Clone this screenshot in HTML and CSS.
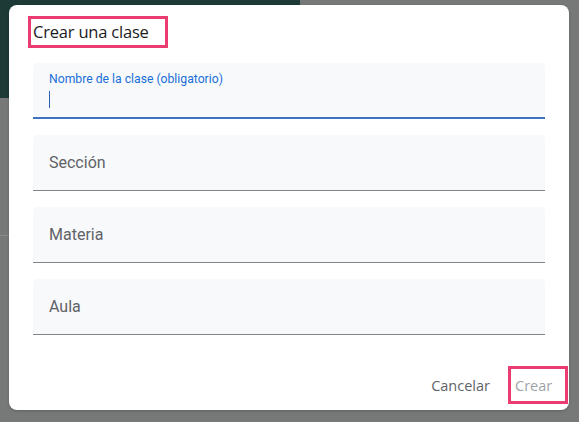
FILE: index.html
```html
<!DOCTYPE html>
<html lang="es">
<head>
<meta charset="utf-8">
<title>Crear una clase</title>
<link rel="stylesheet" href="styles.css">
</head>
<body>
<div class="backdrop-banner"></div>
<div class="backdrop-line"></div>
<div class="dialog">
  <div class="header"><h1 class="title">Crear una clase</h1></div>
  <div class="fields">
    <div class="field field-active">
      <span class="field-label">Nombre de la clase (obligatorio)</span>
      <span class="cursor"></span>
    </div>
    <div class="field"><span class="placeholder">Sección</span></div>
    <div class="field"><span class="placeholder">Materia</span></div>
    <div class="field"><span class="placeholder">Aula</span></div>
  </div>
  <div class="actions">
    <button class="btn btn-cancel">Cancelar</button>
    <button class="btn btn-create">Crear</button>
  </div>
</div>
</body>
</html>
```
FILE: styles.css
```css
* { box-sizing: border-box; }
html, body { margin: 0; height: 100%; }
body {
  background: #777878;
  font-family: Roboto, "Noto Sans", sans-serif;
  padding: 5px 10px 12px 9px;
  position: relative;
  overflow: hidden;
}
.backdrop-banner {
  position: absolute;
  left: 0; top: 0;
  width: 300px; height: 98px;
  background: #1d3a37;
  border-bottom-right-radius: 8px;
}
.backdrop-line {
  position: absolute;
  left: 0; top: 235px;
  width: 12px; height: 1px;
  background: #8a8a8a;
}
.dialog {
  position: relative;
  width: 560px;
  height: 405px;
  background: #fff;
  border-radius: 8px;
  padding: 11px 24px 0 24px;
  display: flex;
  flex-direction: column;
  box-shadow: 0 1px 3px rgba(0,0,0,0.2);
}
.header { display: flex; }
.title {
  margin: 0 0 0 -5px;
  font-family: "Open Sans", Roboto, sans-serif;
  font-weight: 500;
  font-size: 16.5px;
  color: #1b1c1e;
  border: 3px solid #ea3c71;
  height: 32px;
  line-height: 26px;
  padding: 0 16px 0 2px;
  letter-spacing: -0.2px;
}
.fields {
  margin-top: 15px;
  display: flex;
  flex-direction: column;
  gap: 16px;
}
.field {
  height: 56px;
  background: #f8f9fa;
  border-bottom: 1px solid #80868b;
  border-radius: 4px 4px 0 0;
  padding: 0 16px;
  display: flex;
  align-items: center;
  position: relative;
}
.field-active {
  border-bottom: 2px solid #3d73c1;
  flex-direction: column;
  align-items: flex-start;
  justify-content: flex-start;
  padding-top: 9px;
}
.field-label {
  font-size: 12.2px;
  color: #1a6fd8;
  line-height: 14px;
}
.cursor {
  display: block;
  width: 1px;
  height: 17px;
  background: #2b5fad;
  margin-top: 5px;
}
.placeholder {
  font-size: 16px;
  color: #5f6368;
}
.actions {
  margin-top: auto;
  height: 42px;
  margin-bottom: 4px;
  display: flex;
  justify-content: flex-end;
  align-items: center;
  margin-right: -23px;
}
.btn {
  font-family: "Open Sans", Roboto, sans-serif;
  font-size: 14.5px;
  background: none;
  border: none;
  padding: 0;
  cursor: pointer;
}
.btn-cancel {
  color: #5f6368;
  margin-right: 18px;
}
.btn-create {
  color: #a0a4a8;
  border: 3px solid #ea3c71;
  width: 60px;
  height: 38px;
  text-align: left;
  padding-left: 4px;
}
```
